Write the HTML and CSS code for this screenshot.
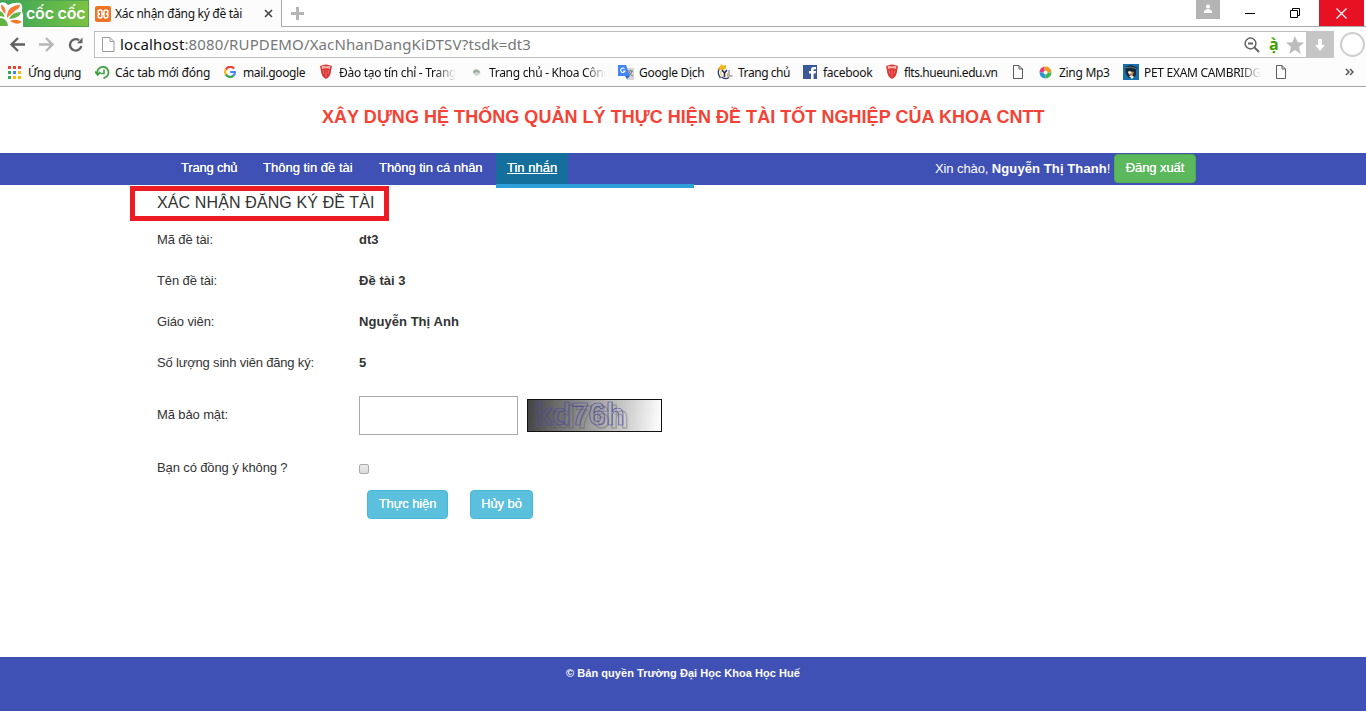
FILE: index.html
```html
<!DOCTYPE html>
<html lang="vi">
<head>
<meta charset="utf-8">
<title>Xác nhận đăng ký đề tài</title>
<link rel="stylesheet" href="styles.css">
</head>
<body>
<svg class="defs" width="0" height="0">
  <symbol id="shield" viewBox="0 0 14 16"><path d="M1 2Q7 -1 13 2L12 7Q12 12 7 15Q2 12 2 7Z" fill="#dc3535"/><path d="M2.500 1.500Q7 3 11.500 1.500L11 5Q7 3.500 3 5Z" fill="#f1b0a9"/><path d="M4 6l1 4M10 6l-1 4M7 6v7" stroke="#ef8a82" stroke-width=".7"/></symbol>
  <symbol id="page" viewBox="0 0 12 14"><path d="M1.500 .5h5.500l3.500 3.500v9.500h-9zM7 .5v3.500h3.500" fill="#fff" stroke="#5c5c5c"/></symbol>
</svg>
<header class="browser">
  <div class="tabstrip">
    <div class="logo">
      <svg width="24" height="26" viewBox="0 0 24 26"><path d="M0 2Q5 0 8 4Q14 1 20 2Q23 4 22 10Q24 14 23 19V26H0Z" fill="#fff"/><path d="M1 3.500Q6 5 5.500 13Q1 10 1 3.500Z" fill="#f47b30"/><path d="M7 14Q8 5 20 3.500Q20 7 16 9L7 17Z" fill="#f47b30"/><path d="M9 18Q12 11 21 11Q20 17 9 18Z" fill="#62b344"/><path d="M10 20Q16 17 22 21Q17 25 10 20Z" fill="#f47b30"/><path d="M0 10Q4 12 4.500 16L0 15Z" fill="#62b344"/><path d="M0 17Q7 17 8 25H0Z" fill="#62b344"/></svg>
      <span class="logo-name">cốc cốc</span>
    </div>
    <div class="tab">
      <svg width="16" height="16" viewBox="0 0 16 16"><rect width="16" height="16" rx="2" fill="#ee7426"/><path d="M5.500 4Q3 4 3 6Q3 8 5 8Q3 8 3 10Q3 12 5.500 12Q7 12 7 10V8H9V10Q9 12 10.500 12Q13 12 13 10Q13 8 11 8Q13 8 13 6Q13 4 10.500 4Q9 4 9 6V8H7V6Q7 4 5.500 4Z" fill="none" stroke="#fff" stroke-width="1.500"/></svg>
      <span class="tab-title">Xác nhận đăng ký đề tài</span>
      <svg class="tab-close" width="9" height="9" viewBox="0 0 9 9"><path d="M1 1l7 7M8 1l-7 7" stroke="#444" stroke-width="1.600"/></svg>
    </div>
    <svg class="new-tab" width="13" height="13" viewBox="0 0 13 13"><path d="M6.500 0v13M0 6.500h13" stroke="#b5b5b5" stroke-width="3"/></svg>
    <div class="window-buttons">
      <div class="user"><svg width="10" height="9" viewBox="0 0 10 9"><circle cx="5" cy="2.500" r="2.100" fill="#fff"/><path d="M1 9V7Q3 5 5 5T9 7V9Z" fill="#fff"/></svg></div>
      <svg class="minimize" width="10" height="12" viewBox="0 0 10 12"><path d="M0 6.500h10" stroke="#000"/></svg>
      <svg class="restore" width="10" height="10" viewBox="0 0 10 10"><path d="M.5 2.500h7v7h-7zM2.500 2V.5h7v7H8" fill="none" stroke="#000"/></svg>
      <div class="close"><svg width="11" height="11" viewBox="0 0 11 11"><path d="M.5 .5l10 10M10.500 .5l-10 10" stroke="#fff" stroke-width="1.200"/></svg></div>
    </div>
  </div>
  <div class="toolbar">
    <svg class="back" width="16" height="15" viewBox="0 0 16 15"><path d="M1.500 7.500H15M8 1L1.500 7.500L8 14" fill="none" stroke="#626262" stroke-width="2.300"/></svg>
    <svg class="forward" width="16" height="15" viewBox="0 0 16 15"><path d="M14.500 7.500H1M8 1l6.500 6.500L8 14" fill="none" stroke="#b7b7b7" stroke-width="2.300"/></svg>
    <svg class="reload" width="16" height="16" viewBox="0 0 16 16"><path d="M13.300 9A5.700 5.700 0 1 1 11 3.200" fill="none" stroke="#626262" stroke-width="2.300"/><path d="M9 6.200h5.500V.5Z" fill="#626262"/></svg>
    <div class="address">
      <svg width="13" height="15" viewBox="0 0 13 15"><path d="M.5 .5h7.500l4 4v10H.5zM8 .5v4h4" fill="#fff" stroke="#9a9a9a"/></svg>
      <span class="url"><b>localhost</b>:8080/RUPDEMO/XacNhanDangKiDTSV?tsdk=dt3</span>
      <svg class="zoom" width="16" height="16" viewBox="0 0 16 16"><circle cx="6.500" cy="6.500" r="5.400" fill="none" stroke="#636363" stroke-width="1.500"/><path d="M4 6.500h5M10.500 10.500L15 15" stroke="#636363" stroke-width="2"/></svg>
      <span class="accent">ạ̀</span>
      <svg class="star" width="18" height="18" viewBox="0 0 18 18"><path d="M9 0l2.600 6.200 6.400.4-5 4.300L14.700 18 9 14l-5.700 4L5 10.900 0 6.600l6.400-.4z" fill="#bdbdbd"/></svg>
    </div>
    <div class="download"><svg width="10" height="12" viewBox="0 0 10 12"><path d="M3 0h4v6h3l-5 6-5-6h3z" fill="#fff"/></svg></div>
    <div class="avatar"></div>
  </div>
  <nav class="bookmarks">
    <a class="bm bm-apps"><svg width="13" height="13" viewBox="0 0 13 13"><path d="M0 0h3v3H0zM5 0h3v3H5z M10 0h3v3h-3z" fill="#e94235"/><path d="M0 5h3v3H0z" fill="#35a853"/><path d="M5 5h3v3H5z" fill="#4285f4"/><path d="M10 5h3v3h-3zM5 10h3v3H5zM10 10h3v3h-3z" fill="#fbbc05"/><path d="M0 10h3v3H0z" fill="#35a853"/></svg><span>Ứng dụng</span></a>
    <a class="bm bm-tabs"><svg width="15" height="13" viewBox="0 0 15 13"><path d="M2.700 8.500A5.600 5.600 0 1 1 8.500 12M0 5.500l2.700 3.300L5.500 6" fill="none" stroke="#43a047" stroke-width="1.800"/><path d="M9 3.500v4H5.500" fill="none" stroke="#43a047" stroke-width="1.600"/></svg><span>Các tab mới đóng</span></a>
    <a class="bm bm-mail"><svg width="12" height="12" viewBox="0 0 12 12" fill="none" stroke-width="2.200"><path d="M10 2.700A4.800 4.800 0 0 0 1.800 3.600" stroke="#ea4335"/><path d="M1.800 3.600A4.900 4.900 0 0 0 1.800 8.400" stroke="#fbbc05"/><path d="M1.800 8.400A4.800 4.800 0 0 0 9.300 9.600" stroke="#34a853"/><path d="M9.300 9.600Q11 8 10.800 6H6.200" stroke="#4285f4"/></svg><span>mail.google</span></a>
    <a class="bm bm-training"><svg width="14" height="16"><use href="#shield"/></svg><span class="fade">Đào tạo tín chỉ - Trang</span></a>
    <a class="bm bm-faculty"><svg width="9" height="8" viewBox="0 0 9 8"><path d="M1 5Q0 2 3 1Q6 0 8 3Q9 6 7 7H2" fill="#d9ddd9"/><path d="M1 4Q4 0 8 4L6 5 4.500 3 3 5ZM3 7h3" fill="#8ba98e" stroke="#9aaa9a" stroke-width=".5"/></svg><span class="fade">Trang chủ - Khoa Công</span></a>
    <a class="bm bm-translate"><svg width="17" height="16" viewBox="0 0 17 16"><path d="M6 4h10v12H9z" fill="#d5d5d5"/><path d="M0 1h8l4 11H0z" fill="#4285f4"/><path d="M7 12h5l-3 3z" fill="#3367d6"/><path d="M6.500 4.700A2.200 2.200 0 1 0 7 7H5" fill="none" stroke="#fff" stroke-width="1.100"/><path d="M10 7h5M12.500 6v1M14 7q-1 4-4 5M11 8q1 3 4 4" fill="none" stroke="#737b80"/></svg><span>Google Dịch</span></a>
    <a class="bm bm-home"><svg width="16" height="16" viewBox="0 0 16 16"><path d="M3.500 3Q-1 8 3.500 14M12 13.500Q8 16 4.500 13" fill="none" stroke="#2f3566" stroke-width="1.300"/><path d="M4 0l2 1.500L9 1v4L5 6 0 5l3-2z" fill="#f4b51e"/><path d="M5 6l2.500 3v4M10 6L7.500 9" fill="none" stroke="#252b59" stroke-width="1.600"/><path d="M12 6v6h3.500" fill="none" stroke="#9c96a0" stroke-width="1.400"/><path d="M4 7q-1 3 1 5M10.500 9v4" fill="none" stroke="#e9b33b"/></svg><span>Trang chủ</span></a>
    <a class="bm bm-fb"><svg width="14" height="14" viewBox="0 0 14 14"><path d="M0 0h14v14H0z" fill="#3b5998"/><path d="M8 14V8.500H6V6h2V4.500Q8 2 10.500 2H13v2.300h-1.500Q10.500 4.300 10.500 5v1H13l-.4 2.500h-2V14z" fill="#fff"/></svg><span>facebook</span></a>
    <a class="bm bm-flts"><svg width="14" height="16"><use href="#shield"/></svg><span>flts.hueuni.edu.vn</span></a>
    <a class="bm bm-page"><svg width="12" height="14"><use href="#page"/></svg></a>
    <a class="bm bm-zing"><svg width="13" height="13" viewBox="0 0 13 13" fill="none" stroke-width="4"><path d="M2.500 6.500a4 4 0 0 1 3-3.900" stroke="#e73a78"/><path d="M5.500 2.600a4 4 0 0 1 5 3.900" stroke="#ee9b21"/><path d="M10.500 6.500a4 4 0 0 1-4 4" stroke="#44b64f"/><path d="M6.500 10.500a4 4 0 0 1-4-4" stroke="#2797d5"/></svg><span>Zing Mp3</span></a>
    <a class="bm bm-pet"><svg width="16" height="16" viewBox="0 0 16 16"><path d="M0 0h16v16H0z" fill="#176fae"/><path d="M2 3l6-2 7 3-2 2v5l-3 3H6L3 10z" fill="#172936"/><path d="M5 7l6 1-1 3H6z" fill="#b07f55"/><path d="M5 8l2-1 2 2-3 1zM6 12l3-1 2 2-2 2z" fill="#f5ead5"/><path d="M2 4l6-1 6 2" fill="none" stroke="#67777f"/></svg><span class="fade">PET EXAM CAMBRIDGE</span></a>
    <a class="bm bm-last"><svg width="12" height="14"><use href="#page"/></svg></a>
    <svg class="more" width="9" height="8" viewBox="0 0 9 8"><path d="M1 1l3 3-3 3M5 1l3 3-3 3" fill="none" stroke="#555" stroke-width="1.500"/></svg>
  </nav>
</header>
<main class="page">
  <h1 class="title"><span>XÂY DỰNG HỆ THỐNG QUẢN LÝ THỰC HIỆN ĐỀ TÀI TỐT NGHIỆP CỦA KHOA CNTT</span></h1>
  <nav class="menu">
    <a class="item"><span>Trang chủ</span></a><a class="item"><span>Thông tin đề tài</span></a><a class="item"><span>Thông tin cá nhân</span></a>
    <div class="item active"><span>Tin nhắn</span><div class="submenu"></div></div>
    <div class="account"><span class="hello">Xin chào, <b>Nguyễn Thị Thanh</b>!</span><button class="btn logout">Đăng xuất</button></div>
  </nav>
  <section class="content">
    <h2 class="heading"><span>XÁC NHẬN ĐĂNG KÝ ĐỀ TÀI</span></h2>
    <div class="highlight"></div>
    <div class="row"><label>Mã đề tài:</label><strong>dt3</strong></div>
    <div class="row"><label>Tên đề tài:</label><strong>Đề tài 3</strong></div>
    <div class="row"><label>Giáo viên:</label><strong>Nguyễn Thị Anh</strong></div>
    <div class="row"><label class="count">Số lượng sinh viên đăng ký:</label><strong>5</strong></div>
    <div class="row code"><label>Mã bảo mật:</label><input class="field" type="text">
      <svg class="captcha" width="135" height="33" viewBox="0 0 135 33"><defs><linearGradient id="shade" gradientUnits="userSpaceOnUse" x1="0" y1="0" x2="132" y2="16"><stop stop-color="#414141"/><stop offset="1" stop-color="#fafafa"/></linearGradient></defs><rect x=".5" y=".5" width="134" height="32" fill="url(#shade)" stroke="#111"/><g class="captcha-text"><text x="12" y="29" stroke="#555" stroke-width="1.400" opacity=".35">kd76h</text><text x="8" y="25.500" stroke="#4a47a5">kd76h</text></g></svg>
    </div>
    <div class="row agree"><label>Bạn có đồng ý không ?</label><span class="check"></span></div>
    <div class="actions"><button class="btn info submit">Thực hiện</button><button class="btn info cancel">Hủy bỏ</button></div>
  </section>
  <footer class="footer"><span>© Bản quyền Trường Đại Học Khoa Học Huế</span></footer>
</main>
</body>
</html>
```
FILE: styles.css
```css
* { box-sizing: border-box; }
body { margin: 0; width: 1366px; height: 712px; overflow: hidden; background: #fff; color: #333; font: 13px "Liberation Sans", Arial, sans-serif; }
svg { display: block; flex: none; }
.defs { position: absolute; }
span, label, strong { white-space: nowrap; }
.browser { height: 87px; border-bottom: 1px solid #a3a3a3; background: #fcfcfc; font-family: "Noto Sans", sans-serif; color: #111; }
.tabstrip { display: flex; height: 27px; border-bottom: 1px solid #aaa; background: #fff; }
.logo { display: flex; width: 89px; height: 27px; background: linear-gradient(90deg, #36a45a, #7cc242); border: 1px solid #50a553; border-left: 0; color: #fff; }
.logo-name { font: 600 16px/25px Inter, sans-serif; margin-left: 2px; letter-spacing: -.2px; }
.tab { width: 193px; height: 27px; display: flex; align-items: center; padding-left: 6px; border-right: 1px solid #aaa; background: #fcfcfc; }
.tab-title { margin-left: 4px; font-size: 12px; width: 149px; letter-spacing: -.3px; }
.new-tab { margin: 7px 0 0 9px; }
.window-buttons { margin-left: auto; display: flex; height: 26px; }
.user { width: 24px; height: 19px; background: #b4b4b4; padding: 4px 7px; }
.minimize { margin: 7px 0 0 25px; }
.restore { margin: 8px 0 0 35px; }
.close { margin-left: 19px; width: 47px; background: #e81123; padding: 8px 0 0 17px; border-right: 2px solid #fff; }
.toolbar { display: flex; height: 33px; }
.back { margin: 10px 0 0 10px; }
.forward { margin: 10px 0 0 12px; }
.reload { margin: 10px 0 0 14px; }
.address { display: flex; width: 1212px; height: 27px; margin: 4px 0 0 10px; border: 1px solid #bebebe; border-right: 0; background: #fff; align-items: center; padding-left: 7px; }
.url { margin-left: 5px; width: 1124px; font-size: 15px; line-height: 22px; padding-bottom: 1px; color: #777; letter-spacing: .12px; }
.url b { font-weight: 400; color: #111; }
.accent { width: 15px; margin-left: 9px; color: #43a000; font: bold 16px/22px "Open Sans", sans-serif; padding-bottom: 1px; }
.star { margin-left: 2px; }
.download { width: 28px; height: 27px; margin-top: 4px; background: #c5c5c5; padding: 8px 9px; }
.avatar { width: 25px; height: 25px; margin: 5px 0 0 6px; border: 2px solid #cfcfcf; border-radius: 50%; background: #fff; }
.bookmarks { display: flex; height: 24px; align-items: center; padding-left: 8px; font-size: 12px; }
.bm { display: flex; align-items: center; height: 24px; gap: 6px; flex: none; letter-spacing: -.3px; }
.fade { overflow: hidden; width: 117px; -webkit-mask-image: linear-gradient(90deg, #000 82%, transparent); mask-image: linear-gradient(90deg, #000 82%, transparent); }
.bm-apps { width: 87px; gap: 7px; letter-spacing: -.5px; }
.bm-tabs { width: 129px; gap: 5px; letter-spacing: -.25px; }
.bm-mail { width: 95px; gap: 7px; letter-spacing: -.4px; }
.bm-training { width: 153px; }
.bm-faculty { width: 146px; gap: 8px; }
.bm-translate { width: 99px; gap: 4px; }
.bm-home { width: 86px; gap: 5px; letter-spacing: -.45px; }
.bm-fb { width: 82px; }
.bm-flts { width: 127px; gap: 5px; letter-spacing: -.45px; }
.bm-page { width: 27px; }
.bm-zing { width: 84px; gap: 7px; }
.bm-pet { width: 152px; gap: 5px; }
.bm-last { width: 70px; }
.page { height: 625px; display: flex; flex-direction: column; }
.title { height: 66px; margin: 0; padding-left: 322px; color: #f44336; font-size: 18px; line-height: 60px; letter-spacing: .04px; }
.menu { height: 32px; display: flex; background: #3f51b5; padding-left: 170px; color: #fff; line-height: 29px; }
.item { padding: 0 11px; margin-right: 4px; text-shadow: 0 0 .4px #fff; letter-spacing: 0; }
.item:nth-child(1) { width: 78px; letter-spacing: -.2px; }
.item:nth-child(2) { width: 112px; }
.item:nth-child(3) { width: 124px; margin-right: 4px; letter-spacing: -.03px; }
.menu .active { position: relative; width: 72px; margin: 0; background: #146f9c; text-decoration: underline; height: 31px; }
.submenu { position: absolute; left: 0; top: 31px; width: 198px; height: 4px; background: #2d9fd9; }
.account { margin-left: auto; width: 431px; display: flex; line-height: 31px; }
.hello { width: 179px; letter-spacing: -.1px; }
.hello b { letter-spacing: .1px; }
.btn { border: 1px solid #4cae4c; border-radius: 4px; color: #fff; font: 13px/20px "Liberation Sans", Arial, sans-serif; height: 29px; padding: 0 0 2px; margin-top: 1px; text-shadow: 0 0 .4px #fff; letter-spacing: -.1px; }
.logout { width: 82px; background: #5cb85c; }
.content { position: relative; height: 472px; padding-left: 157px; }
.heading { margin: 0; height: 34px; font-size: 16px; line-height: 35px; font-weight: 400; letter-spacing: .12px; }
.highlight { position: absolute; left: 130px; top: 1px; width: 259px; height: 35px; border: 5px solid #ed1c24; }
.row { display: flex; height: 41px; align-items: center; }
.row label { width: 202px; letter-spacing: -.12px; }
.row label.count { letter-spacing: -.18px; }
.row strong { letter-spacing: .05px; }
.code { height: 63px; }
.field { width: 159px; height: 39px; margin-top: 2px; border: 1px solid #a9a9a9; background: #fff; }
.captcha { margin: 2px 0 0 9px; }
.captcha-text { font: bold 31px "Liberation Sans", Arial, sans-serif; fill: none; stroke-width: .7; }
.agree { height: 43px; }
.check { width: 10px; height: 10px; margin-top: 3px; border: 1px solid #aaa; border-radius: 2px; background: linear-gradient(#e9e9e9, #dcdcdc); }
.actions { display: flex; padding-left: 210px; gap: 22px; }
.info { background: #5bc0de; border-color: #46b8da; }
.submit { width: 81px; }
.cancel { width: 63px; }
.footer { height: 54px; background: #3f51b5; color: #fff; text-align: center; font-size: 11px; font-weight: bold; line-height: 32px; letter-spacing: .04px; }
```
